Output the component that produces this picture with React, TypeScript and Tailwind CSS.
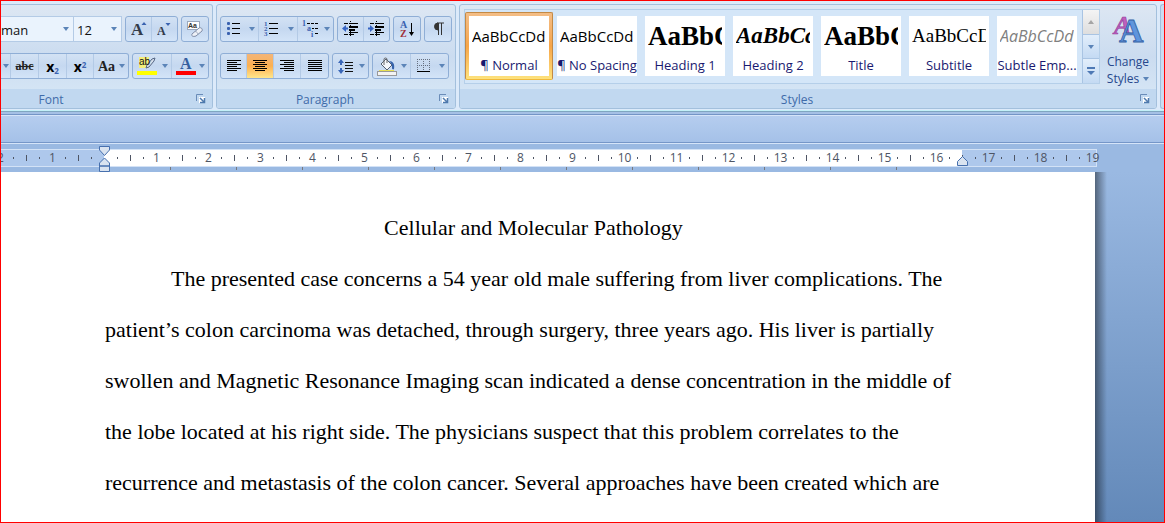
import type { ReactNode } from "react";

const UI = "font-['Open_Sans','Noto_Sans',sans-serif]";
const SERIF = "font-['Liberation_Serif',serif]";
const BLUE = "#3a62b0";

function Arrow() {
  return (
    <svg width="6" height="4" viewBox="0 0 6 4" className="shrink-0">
      <path d="M0 0h6L3 4z" fill="#5b84b8" />
    </svg>
  );
}

function Lines({ rows, step = 3 }: { rows: [number, number][]; step?: number }) {
  return (
    <>
      {rows.map(([a, w], i) => (
        <rect key={i} x={a} y={i * step} width={w} height="1" fill="#000" />
      ))}
    </>
  );
}

function Align({ kind }: { kind: "left" | "center" | "right" | "full" }) {
  const rows: Record<string, [number, number][]> = {
    left: [[0, 14], [0, 10], [0, 14], [0, 10], [0, 14], [0, 10]],
    center: [[0, 14], [2, 10], [0, 14], [2, 10], [0, 14], [2, 10]],
    right: [[0, 14], [4, 10], [0, 14], [4, 10], [0, 14], [4, 10]],
    full: [[0, 14], [0, 14], [0, 14], [0, 14], [0, 14], [0, 14]],
  };
  return (
    <svg width="14" height="12" viewBox="0 0 14 12">
      <Lines rows={rows[kind]} step={2} />
    </svg>
  );
}

function Bullets() {
  return (
    <svg width="17" height="16" viewBox="0 0 17 16">
      {[2, 7, 12].map((y) => (
        <g key={y}>
          <rect x="2" y={y - 1} width="3" height="3" rx="1" fill={BLUE} />
          <rect x="7" y={y} width="8" height="1" fill="#000" />
        </g>
      ))}
    </svg>
  );
}

function Numbering() {
  return (
    <svg width="17" height="16" viewBox="0 0 17 16">
      {[2, 7, 12].map((y, i) => (
        <g key={y}>
          <text x="1" y={y + 3} fontSize="7" fontWeight="bold" fontFamily="Liberation Serif" fill={BLUE}>{i + 1}</text>
          <rect x="6" y={y} width="9" height="1" fill="#000" />
        </g>
      ))}
    </svg>
  );
}

function Multilevel() {
  return (
    <svg width="18" height="18" viewBox="0 0 18 18">
      <g fontSize="8" fontWeight="bold" fontFamily="Liberation Serif" fill={BLUE}>
        <text x="0" y="6">1</text>
        <text x="5" y="11">a</text>
        <text x="9" y="17">i</text>
      </g>
      <path d="M5 3.500h3M9 3.500h3M13 3.500h3M10 8.500h2M13 8.500h3M13 13.500h3" stroke="#000" />
    </svg>
  );
}

function Indent({ dir }: { dir: "left" | "right" }) {
  return (
    <svg width="17" height="16" viewBox="0 0 17 16">
      <path d="M8.5 0v16" stroke="#000" strokeDasharray="1 1" />
      <path d="M2 2.5h4M7 2.5h9M2 13.5h4M7 13.5h5" stroke="#000" />
      <path d="M7 5h9v2H7zM7 8h6v2H7zM7 11h9v1H7z" fill="#000" />
      <path d={dir === "left" ? "M0 7.5L4 4v2.5h2v2H4V11z" : "M6 7.5L2 4v2.5H0v2h2V11z"} fill="#3564c4" />
    </svg>
  );
}

function SortIcon() {
  return (
    <svg width="17" height="18" viewBox="0 0 17 18">
      <g fontSize="10" fontWeight="bold" fontFamily="Liberation Serif">
        <text x="1" y="8" fill={BLUE}>A</text>
        <text x="1" y="17" fill="#a02f3a">Z</text>
      </g>
      <path d="M12.5 3v11" stroke="#000" />
      <path d="M10 12h5l-2.500 4z" fill="#000" />
    </svg>
  );
}

function Pilcrow() {
  return (
    <svg width="11" height="14" viewBox="0 0 11 14">
      <path d="M5 1a3.500 3.500 0 0 0 0 7z" fill="#333" stroke="#333" />
      <path d="M4 1h7M5.500 1v12M8.500 1v12" stroke="#333" fill="none" />
    </svg>
  );
}

function Spacing() {
  return (
    <svg width="17" height="17" viewBox="0 0 17 17">
      <path d="M1 5l3-4 3 4H5v2H3V5zM1 12l3 4 3-4H5v-2H3v2z" fill="#3a67b8" />
      <path d="M8 4.500h8M8 7.500h8M8 10.500h8M8 13.500h8" stroke="#111" />
    </svg>
  );
}

function Bucket() {
  return (
    <svg width="20" height="19" viewBox="0 0 20 19">
      <path d="M4 7l5-5 6 6-5 5z" fill="#f4f6fa" stroke="#555f70" />
      <path d="M7 8V2.500a1.500 1.500 0 0 1 3 0V6" fill="none" stroke="#666" />
      <path d="M12 4c4 0 6 3 5 8-1 1-2 0-2-1 0-3 0-4-3-7z" fill="#3562ab" />
      <path d="M2 13.500h15" stroke="#e8e050" />
      <rect x=".5" y="14.500" width="19" height="4" fill="#f3f3f3" stroke="#999" />
    </svg>
  );
}

function Borders() {
  return (
    <svg width="14" height="14" viewBox="0 0 14 14">
      <path d="M0 .5h13M0 6.500h13M.5 0v12M6.500 0v12M12.500 0v12" stroke="#666f80" strokeDasharray="1 1" />
      <path d="M0 12.500h13" stroke="#000" strokeWidth="1" />
    </svg>
  );
}

function SizeIcon({ up }: { up: boolean }) {
  return (
    <svg width="16" height="18" viewBox="0 0 16 18">
      <text x="0" y="15" fontSize={up ? 17 : 12} fontWeight="bold" fontFamily="Liberation Serif" fill="#333b4a">A</text>
      <path d={up ? "M10.500 5h5L13 2z" : "M8.500 3h5L11 6z"} fill={BLUE} />
    </svg>
  );
}

function Eraser() {
  return (
    <svg width="18" height="18" viewBox="0 0 18 18">
      <rect x="1.500" y="1.500" width="12" height="8" fill="#fff" stroke="#9aa8bd" />
      <text x="2" y="8" fontSize="7" fontWeight="bold" fontFamily="Liberation Sans" fill="#333">Aa</text>
      <path d="M6 14l7-6c2-1 4 1 3 3l-6 5c-3 1-5 0-4-2z" fill="#eef1f7" stroke="#7e8ba5" />
      <path d="M9 11.500c2 0 3 2 3 3" fill="none" stroke="#98a4ba" />
    </svg>
  );
}

function Highlighter() {
  return (
    <svg width="20" height="20" viewBox="0 0 20 20">
      <rect x="2" y="1" width="10" height="11" fill="#f4ee7a" />
      <path d="M9 12l1-3 5-6 3-1-1 3-5 6z" fill="#d5deeb" stroke="#566785" />
      <text x="2" y="9" fontSize="10" fontFamily="Liberation Sans" fill="#111">ab</text>
      <rect x="0" y="15" width="20" height="4" fill="#ff0" />
    </svg>
  );
}

function FontColor() {
  return (
    <svg width="20" height="20" viewBox="0 0 20 20">
      <text x="4" y="13" fontSize="16" fontWeight="bold" fontFamily="Liberation Serif" fill="#355f9f">A</text>
      <rect x="0" y="15" width="20" height="4" fill="#f00" />
    </svg>
  );
}

function ChangeIcon() {
  return (
    <svg width="32" height="32" viewBox="0 0 32 32" fontFamily="Liberation Serif" fontWeight="bold" className="overflow-visible">
      <text x="2" y="21" fontSize="26" fontStyle="italic" fill="#c060bd" stroke="#913c9b" strokeWidth=".6">A</text>
      <text x="7" y="29" fontSize="34" fill="#5f95dd" stroke="#335fa5" strokeWidth=".8">A</text>
    </svg>
  );
}

function Btn({ label, w, arrow = false, on = false, children }: { label: string; w: string; arrow?: boolean; on?: boolean; children: ReactNode }) {
  return (
    <button
      aria-label={label}
      className={`flex h-full shrink-0 items-center border-r border-[#b3cae6] last:border-r-0 ${arrow ? "justify-between pr-[3px] pl-1" : "justify-center"} ${w} ${on ? "bg-linear-to-b from-[#f3b578] via-[#fcb050] to-[#fee68b]" : ""}`}
    >
      {children}
      {arrow && <Arrow />}
    </button>
  );
}

function Cluster({ children, cut = false }: { children: ReactNode; cut?: boolean }) {
  return (
    <div className={`flex h-[26px] shrink-0 overflow-hidden border border-[#8faed6] bg-linear-to-b from-[#d3e2f4] via-[#c5d8f0] to-[#d3e4f8] ${cut ? "rounded-r-[3px] border-l-0" : "rounded-[3px]"}`}>
      {children}
    </div>
  );
}

function Combo({ label, value, w }: { label: string; value: string; w: string }) {
  return (
    <div className={`relative h-[26px] border border-l-0 border-[#b4cbe6] bg-[#eaf3fd] ${w}`}>
      <select aria-label={label} defaultValue={value} className={`h-full w-full appearance-none bg-transparent pb-0.5 text-[13px] text-[#111] ${label === "Font" ? "pl-0" : "pl-[3px]"}`}>
        <option>{value}</option>
      </select>
      <span className="pointer-events-none absolute inset-y-0 right-1 flex items-center"><Arrow /></span>
    </div>
  );
}

function Group({ title, className, cut = false, children }: { title: string; className: string; cut?: boolean; children: ReactNode }) {
  return (
    <section className={`flex h-[105px] flex-col overflow-hidden border border-[#a3c0dd] bg-linear-to-b from-[#dde7f3] via-[#cbdcf0] to-[#d9e9f7] ${cut ? "rounded-r-[3px] border-l-0" : "rounded-[3px]"} ${className}`}>
      <div className="min-h-0 flex-1">{children}</div>
      <div className="flex h-[19px] items-center bg-[#c1d8f0] text-[12px] text-[#3f6ba9]">
        <h2 className={`flex-1 pt-0.5 text-center ${cut ? "pr-[89px]" : ""}`}>{title}</h2>
        <button aria-label={`${title} settings`} className="flex w-[22px] justify-center">
          <svg width="10" height="10" viewBox="0 0 10 10">
            <path d="M.5 7V.5H7" fill="none" stroke="#6a8cb8" />
            <path d="M3 3h6v6H3z" fill="#fff" />
            <path d="M4 4l4 4M8.500 4v4.500H4" fill="none" stroke="#4e79ad" strokeWidth="1.500" />
          </svg>
        </button>
      </div>
    </section>
  );
}

const STYLES = [
  { name: "¶ Normal", sample: "AaBbCcDd", font: "font-['Open_Sans',sans-serif] text-[15px] text-black" },
  { name: "¶ No Spacing", sample: "AaBbCcDd", font: "font-['Open_Sans',sans-serif] text-[15px] text-black" },
  { name: "Heading 1", sample: "AaBbC", font: "font-['Liberation_Serif',serif] text-[27px] font-bold text-black" },
  { name: "Heading 2", sample: "AaBbCc", font: "font-['Liberation_Serif',serif] text-[23px] font-bold italic text-black" },
  { name: "Title", sample: "AaBbC", font: "font-['Liberation_Serif',serif] text-[27px] font-bold text-black" },
  { name: "Subtitle", sample: "AaBbCcD", font: "font-['Liberation_Serif',serif] text-[19px] text-black" },
  { name: "Subtle Emp...", sample: "AaBbCcDd", font: "font-['Open_Sans',sans-serif] text-[16px] italic text-[#808080]" },
];

function Gallery() {
  return (
    <div className="mt-1 flex h-[75px] min-w-0 flex-1 border border-[#b5cfe9] bg-[#d4e6f8]">
      <div className="flex min-w-0 flex-1 overflow-hidden pt-0.5">
        {STYLES.map((s, i) => (
          <button
            key={s.name}
            className={`h-[68px] w-[88px] shrink-0 border p-[3px] ${i === 0 ? "rounded-[2px] border-[#c48a45] border-b-[#f0b93c] bg-linear-to-b from-[#f3bd86] via-[#f6a548] to-[#fde27c]" : "border-transparent"}`}
          >
            <span className="flex h-full flex-col overflow-hidden bg-white">
              <span className={`flex h-10 items-center overflow-hidden px-[3px] whitespace-nowrap ${s.font}`}>
                <span className="w-full overflow-hidden text-left">{s.sample}</span>
              </span>
              <span className="flex justify-center text-[13px] leading-[19px] whitespace-nowrap text-[#191970]">{s.name}</span>
            </span>
          </button>
        ))}
      </div>
      <div className="flex w-[17px] flex-col border-l border-[#a9c4e3]">
        <button aria-label="Scroll up" className="flex flex-1 items-center justify-center bg-linear-to-b from-[#f4f4f4] to-[#dedede]">
          <svg width="6" height="4" viewBox="0 0 6 4"><path d="M0 4h6L3 0z" fill="#a5a5a5" /></svg>
        </button>
        <button aria-label="Scroll down" className="flex flex-1 items-center justify-center border-y border-[#a9c4e3] bg-linear-to-b from-[#e2eefb] to-[#c4daf3]"><Arrow /></button>
        <button aria-label="More styles" className="flex flex-1 items-center justify-center bg-linear-to-b from-[#e2eefb] to-[#c4daf3]">
          <svg width="8" height="8" viewBox="0 0 8 8"><path d="M0 0h8v2H0zM0 4h8L4 8z" fill="#4e79b5" /></svg>
        </button>
      </div>
    </div>
  );
}

function Ribbon() {
  return (
    <div className="flex gap-[3px] overflow-hidden border-b border-[#c3f0f8] bg-[#dceafa] pt-[3px] pb-px">
      <Group title="Font" className="w-[212px] shrink-0" cut>
        <div className="flex gap-[3px] pt-[11px]">
          <div className="flex"><Combo label="Font" value="man" w="w-[73px]" /><Combo label="Font size" value="12" w="w-[48px]" /></div>
          <Cluster>
            <Btn label="Grow font" w="w-[26px]"><SizeIcon up /></Btn>
            <Btn label="Shrink font" w="w-[25px]"><SizeIcon up={false} /></Btn>
          </Cluster>
          <Cluster><Btn label="Clear formatting" w="w-[26px]"><Eraser /></Btn></Cluster>
        </div>
        <div className="flex gap-[3px] pt-[11px]">
          <Cluster cut>
            <Btn label="Underline options" w="w-[10px]"><Arrow /></Btn>
            <Btn label="Strikethrough" w="w-[28px]"><span className={`${SERIF} text-[12px] font-bold text-[#222] line-through`}>abc</span></Btn>
            <Btn label="Subscript" w="w-[28px]"><span className="text-[14px] font-bold text-black">x<sub className="text-[8px] text-[#3a62b0]">2</sub></span></Btn>
            <Btn label="Superscript" w="w-[27px]"><span className="text-[14px] font-bold text-black">x<sup className="text-[8px] text-[#3a62b0]">2</sup></span></Btn>
            <Btn label="Change case" w="w-[34px]" arrow><span className={`${SERIF} text-[14px] font-bold text-[#222]`}>Aa</span></Btn>
          </Cluster>
          <Cluster>
            <Btn label="Highlight" w="w-[39px]" arrow><Highlighter /></Btn>
            <Btn label="Font color" w="w-[36px]" arrow><FontColor /></Btn>
          </Cluster>
        </div>
      </Group>

      <Group title="Paragraph" className="w-[240px] shrink-0">
        <div className="flex gap-[3px] pt-[11px] pl-[3px]">
          <Cluster>
            <Btn label="Bullets" w="w-[38px]" arrow><Bullets /></Btn>
            <Btn label="Numbering" w="w-[39px]" arrow><Numbering /></Btn>
            <Btn label="Multilevel list" w="w-[35px]" arrow><Multilevel /></Btn>
          </Cluster>
          <Cluster>
            <Btn label="Decrease indent" w="w-[26px]"><Indent dir="left" /></Btn>
            <Btn label="Increase indent" w="w-[25px]"><Indent dir="right" /></Btn>
          </Cluster>
          <Cluster><Btn label="Sort" w="w-[26px]"><SortIcon /></Btn></Cluster>
          <Cluster><Btn label="Show marks" w="w-[26px]"><Pilcrow /></Btn></Cluster>
        </div>
        <div className="flex gap-[3px] pt-[11px] pl-[3px]">
          <Cluster>
            <Btn label="Align left" w="w-[26px]"><Align kind="left" /></Btn>
            <Btn label="Center" w="w-[27px]" on><Align kind="center" /></Btn>
            <Btn label="Align right" w="w-[27px]"><Align kind="right" /></Btn>
            <Btn label="Justify" w="w-[27px]"><Align kind="full" /></Btn>
          </Cluster>
          <Cluster><Btn label="Line spacing" w="w-[35px]" arrow><Spacing /></Btn></Cluster>
          <Cluster>
            <Btn label="Shading" w="w-[38px]" arrow><Bucket /></Btn>
            <Btn label="Borders" w="w-[37px]" arrow><span className="pl-0.5"><Borders /></span></Btn>
          </Cluster>
        </div>
      </Group>

      <Group title="Styles" className="min-w-0 flex-1">
        <div className="flex pl-1">
          <Gallery />
          <button className="flex w-[56px] shrink-0 flex-col items-center pt-2 text-[12px] leading-[17px] text-[#26488c]">
            <ChangeIcon />
            <span className="pt-2">Change</span>
            <span className="flex items-center gap-1">Styles <Arrow /></span>
          </button>
        </div>
      </Group>
      <div className="w-1 shrink-0 rounded-l-[3px] border border-r-0 border-[#a3c0dd] bg-[#cbdcf0]" />
    </div>
  );
}

function Ruler() {
  const cells = Array.from({ length: 85 }, (_, k) => k);
  const stops = Array.from({ length: 12 }, (_, k) => k);
  return (
    <div className="relative h-[28px] overflow-hidden bg-[#9ab9e2] pt-[5px]">
      <div className="flex h-[18px] w-[1096px] items-center border-y border-r border-[#d3e2f6] bg-[linear-gradient(to_right,#aec8ec_103px,#fff_103px,#fff_961px,#aec8ec_961px)]">
        <div className="-ml-[7px] flex items-center">
          {cells.map((k) => (
            <span key={k} className="flex h-4 w-[13px] shrink-0 items-center justify-center text-[12px] text-[#4e5564]">
              {k % 4 === 0 ? (k === 8 ? "" : Math.abs(k / 4 - 2)) : k % 4 === 2 ? <i className="h-[6px] w-px bg-[#4e5564]" /> : <i className="h-[2px] w-px bg-[#4e5564]" />}
            </span>
          ))}
        </div>
      </div>
      <div className="ml-[169px] flex gap-[65px]">
        {stops.map((k) => <i key={k} className="h-[3px] w-px shrink-0 bg-[#77797f]" />)}
      </div>
      <svg width="12" height="27" viewBox="0 0 12 27" className="absolute top-[2px] left-[97px]" fill="#d9e3f0" stroke="#4770ae">
        <path d="M1.500 .5h10v3.500l-5 5.500-5-5.500zM6.500 12l5 5v3h-10v-3zM1.500 20h10v5.500h-10z" />
      </svg>
      <svg width="12" height="12" viewBox="0 0 12 12" className="absolute top-[11px] left-[955px]" fill="#d9e3f0" stroke="#4770ae">
        <path d="M6.500 1.500l5 5v4h-10v-4z" />
      </svg>
    </div>
  );
}

export default function App() {
  return (
    <div className={`flex min-h-screen flex-col overflow-hidden border border-[#f00] bg-[#9ab9e2] ${UI}`}>
      <Ribbon />
      <div className="h-1 border-y border-t-[#7fa6c0] border-b-[#7495c6] bg-[#a5c0e5]" />
      <div className="h-[28px] border-y border-t-[#d5e4f8] border-b-[#7596c8] bg-linear-to-b from-[#b5cdef] to-[#a5c1e8]" />
      <div className="h-px bg-[#d5e4f8]" />
      <Ruler />
      <main className="flex flex-1">
        <article className={`flex-1 bg-white pt-[31px] pl-[104px] text-[22px] leading-[51px] whitespace-nowrap text-black ${SERIF}`}>
          <h1 className="w-[857px] text-center leading-[50px]">Cellular and Molecular Pathology</h1>
          <p className="w-[857px] indent-[66px]">
            The presented case concerns a 54 year old male suffering from liver complications. The<br />
            patient’s colon carcinoma was detached, through surgery, three years ago. His liver is partially<br />
            swollen and Magnetic Resonance Imaging scan indicated a dense concentration in the middle of<br />
            the lobe located at his right side. The physicians suspect that this problem correlates to the<br />
            recurrence and metastasis of the colon cancer. Several approaches have been created which are
          </p>
        </article>
        <aside className="flex w-[69px] shrink-0 bg-linear-to-b from-[#9ab9e2] to-[#6389b9]">
          <div className="w-3 bg-linear-to-r from-black/45 to-transparent" />
        </aside>
      </main>
    </div>
  );
}
